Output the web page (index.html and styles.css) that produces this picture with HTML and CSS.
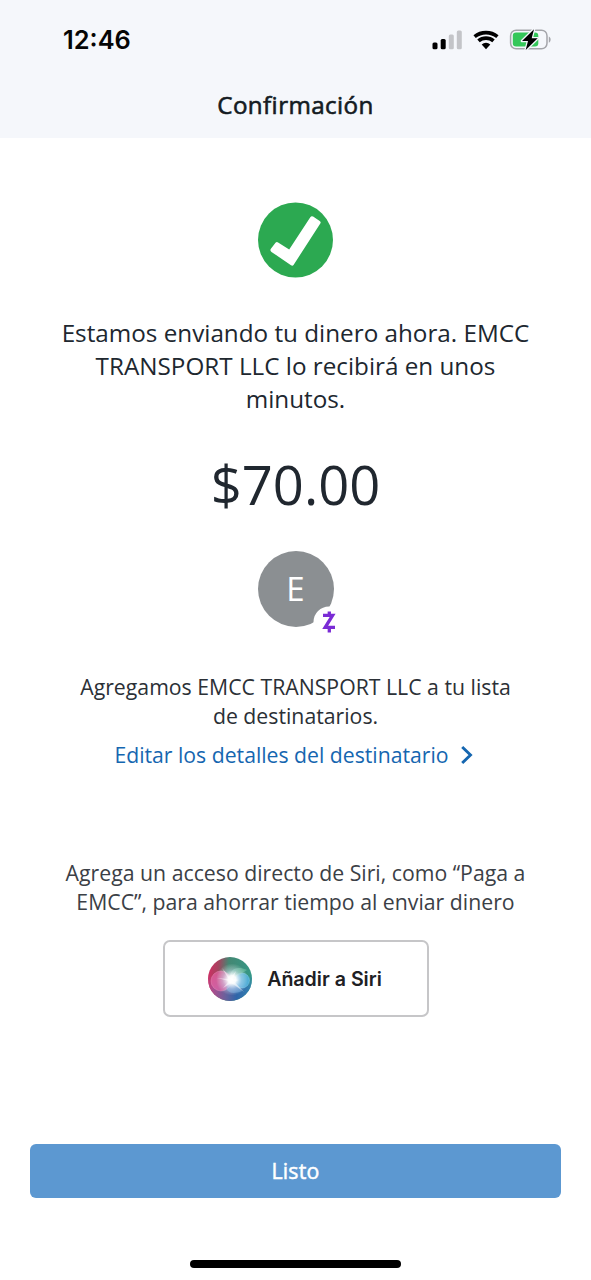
FILE: index.html
```html
<!DOCTYPE html>
<html lang="es">
<head>
<meta charset="utf-8">
<title>Confirmación</title>
<link rel="stylesheet" href="styles.css">
</head>
<body>
<div class="screen">
  <header class="header">
    <div class="status">
      <span class="time">12:46</span>
      <svg class="status-icons" width="122" height="24" viewBox="0 0 122 24">
        <rect x="0.5" y="14.5" width="5" height="6.7" rx="1.5"/>
        <rect x="8.7" y="11" width="5" height="10.2" rx="1.5"/>
        <rect x="16.8" y="6.5" width="5" height="14.7" rx="1.5" fill="#c3c4c8"/>
        <rect x="24.8" y="2.5" width="5" height="18.7" rx="1.5" fill="#c3c4c8"/>
        <path d="M42.6 8.6A18 18 0 0 1 65.4 8.6M46.5 12.9A11.5 11.5 0 0 1 61.5 12.9" fill="none" stroke="#000" stroke-width="3.7"/>
        <path d="M49.7 16.6a6.2 6.2 0 0 1 8.6 0L54 21.2Z"/>
        <rect x="78.6" y="2.2" width="36.4" height="18.6" rx="5.5" fill="none" stroke="#a4a5aa" stroke-width="1.5"/>
        <path d="M116.8 8.5c2.4.9 2.4 5.3 0 6.2Z" fill="#a4a5aa"/>
        <rect x="80.8" y="4.5" width="25.5" height="14" rx="3.3" fill="#34c759"/>
        <path d="M102 1.2 90 13h6l-2.3 9 12-11.8h-6Z" stroke="#f5f7fb" stroke-width="2.6" paint-order="stroke" stroke-linejoin="round"/>
      </svg>
    </div>
    <h1 class="title">Confirmación</h1>
  </header>

  <main class="content">
    <svg class="success" width="76" height="76" viewBox="0 0 76 76">
      <circle cx="37.5" cy="38" r="37.5" fill="#2ca951"/>
      <path d="M12.9 46.7 17.5 40.7Q18.7 39.5 20.1 40.4L31.2 47.6 52.3 15.2Q53.5 13.6 55.1 14.6L61.7 18.9Q63.3 20 62.3 21.6L35.7 62.7Q34.6 64.3 33 63.2L13.5 49.9Q11.6 48.5 12.9 46.7Z" fill="#fff"/>
    </svg>
    <p class="message">Estamos enviando tu dinero ahora. EMCC<br>TRANSPORT LLC lo recibirá en unos<br>minutos.</p>
    <p class="amount">$70.00</p>
    <div class="avatar">E
      <svg class="badge" width="32" height="32" viewBox="0 0 32 32">
        <circle cx="16" cy="16" r="15.5" fill="#fff"/>
        <path d="M10 9.4H19.6L12.2 21.3H22M16.3 5.4V9M16.3 22V26.5" fill="none" stroke="#7a2bd5" stroke-width="3.3"/>
      </svg>
    </div>
    <p class="note">Agregamos EMCC TRANSPORT LLC a tu lista<br>de destinatarios.</p>
    <a class="link">Editar los detalles del destinatario
      <svg width="14" height="20" viewBox="0 0 14 20"><path d="M2.2 2 10.5 10 2.2 18" fill="none" stroke="#1566b0" stroke-width="2.9"/></svg>
    </a>
    <p class="note siri-note">Agrega un acceso directo de Siri, como “Paga a<br>EMCC”, para ahorrar tiempo al enviar dinero</p>
    <button class="siri">
      <svg width="44" height="44" viewBox="0 0 44 44">
        <defs>
          <linearGradient id="top" x1="0" y1="0.3" x2="1" y2="0.4">
            <stop offset="0" stop-color="#d02e63"/><stop offset=".22" stop-color="#a5435f"/><stop offset=".45" stop-color="#448773"/><stop offset="1" stop-color="#349986"/>
          </linearGradient>
          <linearGradient id="low" x1="0" y1="0" x2="1" y2="0">
            <stop offset="0" stop-color="#c44487"/><stop offset=".4" stop-color="#69619c"/><stop offset=".65" stop-color="#2e65a9"/><stop offset="1" stop-color="#3585b2"/>
          </linearGradient>
          <linearGradient id="fade" x1="0" y1="0" x2="0" y2="1">
            <stop offset=".4" stop-color="#fff" stop-opacity="0"/><stop offset=".7" stop-color="#fff"/>
          </linearGradient>
          <mask id="lower"><rect width="44" height="44" fill="url(#fade)"/></mask>
          <radialGradient id="glow">
            <stop offset="0" stop-color="#fff"/><stop offset=".25" stop-color="#fff" stop-opacity=".95"/><stop offset=".6" stop-color="#e7efff" stop-opacity=".4"/><stop offset="1" stop-color="#fff" stop-opacity="0"/>
          </radialGradient>
        </defs>
        <circle cx="22" cy="22" r="22" fill="url(#top)"/>
        <circle cx="22" cy="22" r="22" fill="url(#low)" mask="url(#lower)"/>
        <circle cx="13" cy="24" r="10" fill="#e567a8" fill-opacity=".7" stroke="#f3a0c7" stroke-opacity=".35"/>
        <circle cx="34" cy="23.5" r="7.5" fill="#57b7e4" fill-opacity=".8" stroke="#9adcf0" stroke-opacity=".35"/>
        <path d="M23 23C20 13 28 8 39 13 34 16 30 19 23 23Z" fill="#71c6a5" opacity=".55"/>
        <path d="M22 24C14 31 20 40 34 34 31 30 28 26 22 24Z" fill="#68a5dc" opacity=".5"/>
        <circle cx="24" cy="22.5" r="16" fill="url(#glow)"/>
        <path d="M14 11 22.5 21 28 14 25 22 31 23 26 24.5 36 35 23.5 26 15 31 21 24 9 21 20.5 22Z" fill="#fff" opacity=".5"/>
      </svg>
      <span>Añadir a Siri</span>
    </button>
  </main>

  <footer class="footer">
    <button class="done">Listo</button>
    <div class="home-bar"></div>
  </footer>
</div>
</body>
</html>
```
FILE: styles.css
```css
* {
  box-sizing: border-box;
}

body,
h1,
p {
  margin: 0;
}

body {
  background: #fff;
  color: #20272f;
  font-family: "Open Sans", sans-serif;
}

.screen {
  display: flex;
  flex-direction: column;
  width: 591px;
  height: 1280px;
  overflow: hidden;
}

.header {
  height: 138px;
  background: #f5f7fb;
}

.status {
  display: flex;
  justify-content: space-between;
  align-items: center;
  height: 79px;
  padding: 0 37px 0 63px;
}

.time {
  color: #050505;
  font: 600 25.4px/30px Inter, sans-serif;
}

.title {
  color: #141b22;
  font-size: 24.2px;
  font-weight: 400;
  letter-spacing: 0.4px;
  line-height: 52px;
  text-align: center;
  -webkit-text-stroke: 0.6px currentColor;
}

.content {
  display: flex;
  flex-direction: column;
  align-items: center;
  padding-top: 64px;
  text-align: center;
  white-space: nowrap;
}

.success {
  display: block;
}

.message {
  margin-top: 38px;
  font-size: 24.25px;
  line-height: 33px;
}

.amount {
  margin-top: 31px;
  font-size: 54.3px;
  line-height: 76px;
}

.avatar {
  position: relative;
  width: 76px;
  height: 76px;
  margin-top: 29px;
  border-radius: 50%;
  background: #8b8f92;
  color: #fff;
  font-size: 33px;
  line-height: 76px;
}

.badge {
  position: absolute;
  top: 55px;
  left: 55px;
}

.note {
  margin-top: 45px;
  color: #2b3036;
  font-size: 21.25px;
  line-height: 29px;
}

.link {
  display: flex;
  align-items: center;
  gap: 11px;
  margin-top: 10px;
  color: #1566b0;
  font-size: 21.2px;
  line-height: 30px;
}

.link svg {
  margin-right: 3px;
}

.siri-note {
  margin-top: 88px;
  color: #3b4046;
}

.siri {
  display: flex;
  align-items: center;
  justify-content: center;
  gap: 15px;
  width: 266px;
  height: 77px;
  margin-top: 24px;
  padding: 0 1px 0 0;
  border: 2px solid #c6c6c8;
  border-radius: 7px;
  background: #fff;
  color: #202023;
  font: 600 19.6px/24px Inter, sans-serif;
}

.footer {
  display: flex;
  flex-direction: column;
  align-items: center;
  margin-top: auto;
  padding: 0 30px 12px;
}

.done {
  width: 531px;
  height: 54px;
  padding: 0;
  border: 0;
  border-radius: 6px;
  background: #5c98d1;
  color: #fff;
  font: 400 21.3px/54px "Open Sans", sans-serif;
  letter-spacing: 0.2px;
  -webkit-text-stroke: 0.5px currentColor;
}

.home-bar {
  width: 211px;
  height: 8px;
  margin-top: 62px;
  border-radius: 4px;
  background: #000;
}
```
